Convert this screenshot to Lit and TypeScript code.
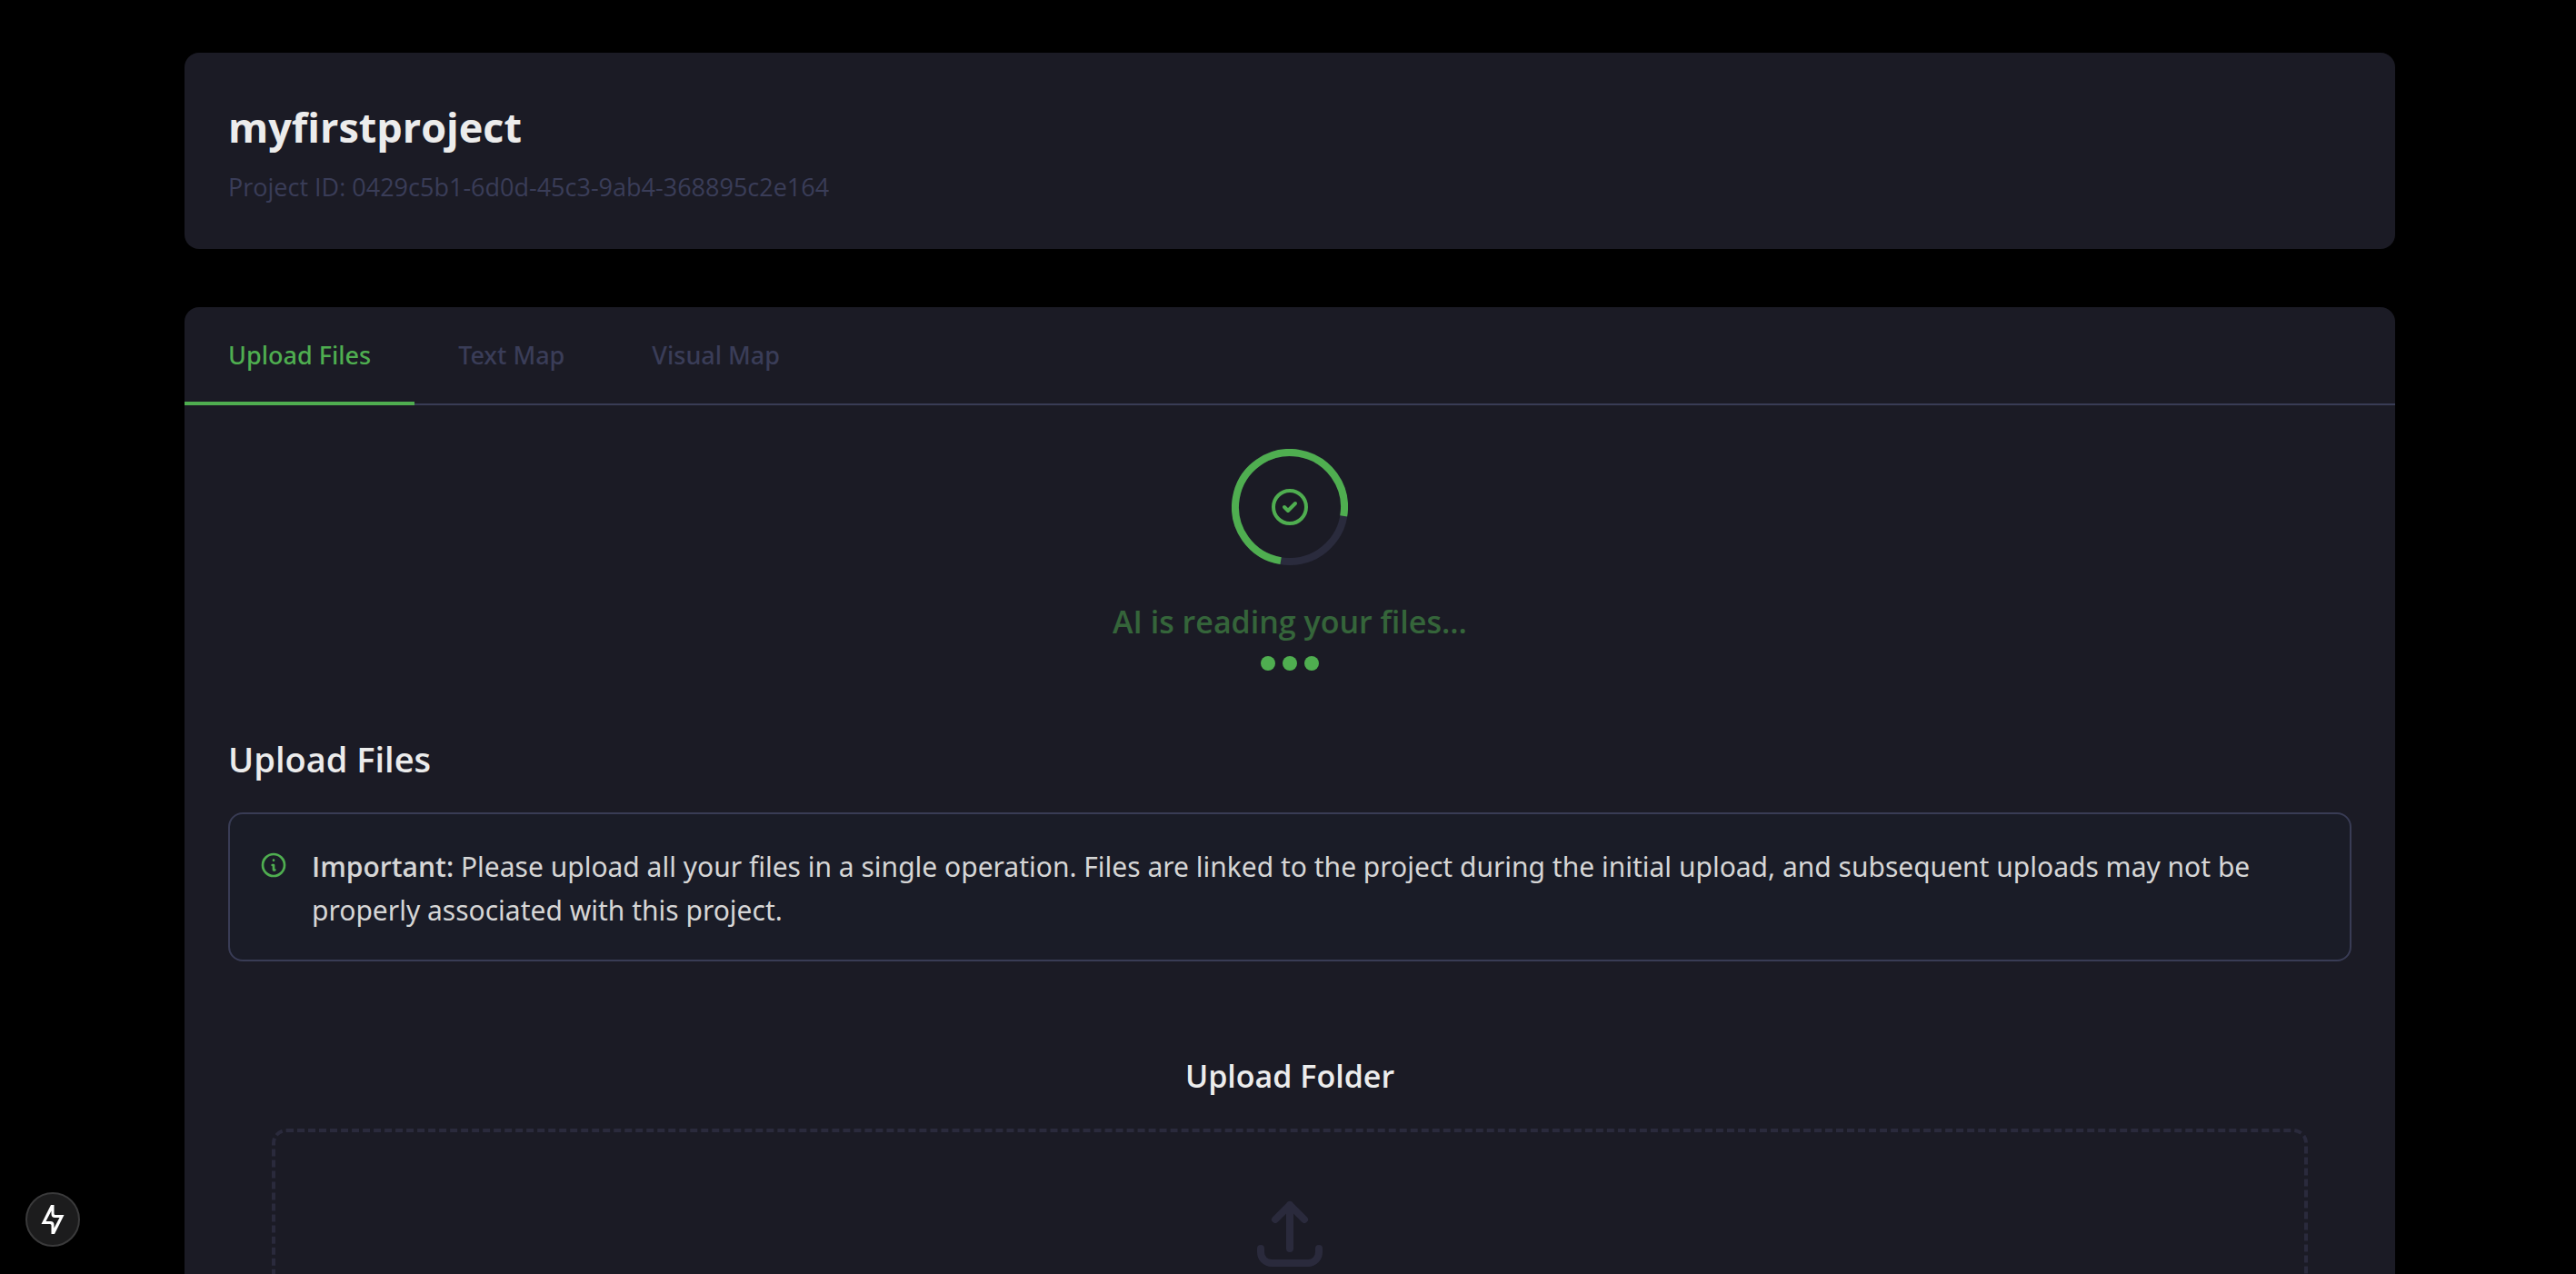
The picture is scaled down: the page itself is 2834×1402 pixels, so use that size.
import { LitElement, html, css } from 'lit';
import { customElement, state } from 'lit/decorators.js';

const TABS = ['Upload Files', 'Text Map', 'Visual Map'];

@customElement('app-root')
export class AppRoot extends LitElement {
  @state() private active = 0;

  static styles = css`
    :host {
      display: block;
      box-sizing: border-box;
      height: 100vh;
      overflow: hidden;
      padding: 58px 64px 0 68px;
      background: #000;
      color: #ececec;
      font-family: 'Open Sans', 'Noto Sans', sans-serif;
      font-size: 30px;
      line-height: 48px;
    }
    * {
      box-sizing: border-box;
    }
    h1,
    h2,
    h3,
    p {
      margin: 0;
    }
    button {
      font: inherit;
      color: inherit;
      background: none;
      border: 0;
      padding: 0;
      cursor: pointer;
    }
    svg {
      display: block;
      fill: none;
      stroke: currentColor;
      stroke-width: 2;
      stroke-linecap: round;
      stroke-linejoin: round;
    }
    .page {
      display: flex;
      flex-direction: column;
      gap: 64px;
      max-width: 2432px;
      margin: 0 auto;
    }
    .card {
      background: #1b1b25;
      border-radius: 16px;
    }
    .project {
      display: flex;
      flex-direction: column;
      gap: 12px;
      padding: 48px;
    }
    .title {
      font-size: 45px;
      line-height: 68px;
      font-weight: 700;
      font-variant-ligatures: none;
    }
    .project-id {
      font-size: 27px;
      line-height: 40px;
      color: #3a3d58;
    }
    .tabs {
      display: flex;
      height: 108px;
      border-bottom: 2px solid #393c55;
    }
    .tab {
      height: 108px;
      padding: 2px 48px 0;
      border-bottom: 4px solid transparent;
      font-family: 'Noto Sans', 'Open Sans', sans-serif;
      font-size: 27px;
      font-weight: 500;
      color: #3a3d58;
    }
    .tab.active {
      color: #4fae50;
      border-bottom-color: #4fae50;
    }
    .panel {
      padding: 48px;
    }
    .status {
      display: flex;
      flex-direction: column;
      align-items: center;
      color: #4fae50;
    }
    .spinner {
      display: grid;
      place-items: center;
      margin-bottom: 32px;
    }
    .spinner > svg {
      grid-area: 1 / 1;
    }
    .ring {
      width: 128px;
      height: 128px;
      stroke-width: 8;
      stroke-linecap: butt;
    }
    .track {
      stroke: #2a2b3d;
    }
    .check {
      width: 48px;
      height: 48px;
    }
    .status-text {
      font-size: 34px;
      font-weight: 600;
      line-height: 60px;
      opacity: 0.5;
    }
    .dots {
      display: flex;
      gap: 8px;
      margin-top: 8px;
    }
    .dot {
      width: 16px;
      height: 16px;
      border-radius: 50%;
      background: #4fae50;
    }
    .heading {
      margin-top: 64px;
      margin-bottom: 26px;
      font-size: 38px;
      font-weight: 600;
      line-height: 66px;
    }
    .notice {
      display: flex;
      gap: 26px;
      padding: 34px 32px 30px;
      border: 2px solid #393c55;
      border-radius: 16px;
      background: #1a1c27;
      color: #d6d6d6;
      font-family: 'Noto Sans', 'Open Sans', sans-serif;
    }
    .info {
      flex: none;
      width: 32px;
      height: 32px;
      margin-top: 6px;
      color: #4fae50;
    }
    strong {
      font-family: 'Open Sans', 'Noto Sans', sans-serif;
      font-weight: 600;
    }
    .folder {
      padding: 96px 48px 0;
    }
    .folder-title {
      margin-bottom: 28px;
      font-size: 34px;
      font-weight: 600;
      line-height: 60px;
      text-align: center;
    }
    .dropzone {
      display: flex;
      justify-content: center;
      width: 100%;
      padding: 64px 64px 128px;
      border: 4px dashed #2a2a3c;
      border-radius: 16px;
      color: #2a2a3c;
    }
    .upload {
      width: 96px;
      height: 96px;
    }
    .badge {
      position: fixed;
      left: 28px;
      bottom: 30px;
      display: grid;
      place-items: center;
      width: 60px;
      height: 60px;
      border: 2px solid #3a3a3b;
      border-radius: 50%;
      background: #1c1c1d;
      color: #fff;
    }
    .bolt {
      width: 32px;
      height: 32px;
      stroke: none;
      fill: currentColor;
      fill-rule: evenodd;
    }
  `;

  render() {
    return html`
      <main class="page">
        <header class="card project">
          <h1 class="title">myfirstproject</h1>
          <p class="project-id">Project ID: 0429c5b1-6d0d-45c3-9ab4-368895c2e164</p>
        </header>

        <section class="card">
          <nav class="tabs" role="tablist">
            ${TABS.map(
              (label, i) => html`<button
                class="tab ${i === this.active ? 'active' : ''}"
                role="tab"
                aria-selected=${i === this.active}
                @click=${() => (this.active = i)}
              >${label}</button>`,
            )}
          </nav>

          <div class="panel">
            <div class="status" role="status">
              <div class="spinner">
                <svg class="ring" viewBox="0 0 128 128" aria-hidden="true">
                  <circle class="track" cx="64" cy="64" r="60" />
                  <circle cx="64" cy="64" r="60" pathLength="360" stroke-dasharray="270 90" transform="rotate(99.5 64 64)" />
                </svg>
                <svg class="check" viewBox="0 0 24 24" aria-hidden="true">
                  <path d="M9 12l2 2 4-4m6 2a9 9 0 11-18 0 9 9 0 0118 0z" />
                </svg>
              </div>
              <p class="status-text">AI is reading your files...</p>
              <div class="dots">
                <span class="dot"></span>
                <span class="dot"></span>
                <span class="dot"></span>
              </div>
            </div>

            <h2 class="heading">Upload Files</h2>
            <div class="notice">
              <svg class="info" viewBox="0 0 24 24" aria-hidden="true">
                <path d="M13 16h-1v-4h-1m1-4h.01M21 12a9 9 0 11-18 0 9 9 0 0118 0z" />
              </svg>
              <p>
                <strong>Important:</strong> Please upload all your files in a single operation. Files are linked to
                the project during the initial upload, and subsequent uploads may not be properly associated with
                this project.
              </p>
            </div>

            <div class="folder">
              <h3 class="folder-title" id="folder-title">Upload Folder</h3>
              <button class="dropzone" aria-labelledby="folder-title">
                <svg class="upload" viewBox="0 0 24 24" aria-hidden="true">
                  <path d="M4 16v1a3 3 0 003 3h10a3 3 0 003-3v-1m-4-8l-4-4m0 0L8 8m4-4v12" />
                </svg>
              </button>
            </div>
          </div>
        </section>
      </main>

      <button class="badge">
        <svg class="bolt" viewBox="0 0 32 32" aria-hidden="true">
          <path d="M14 0H17.500V9.500Q17.500 11 19 11H28.500L18 32H14.500V22.500Q14.500 21 13 21H3.500ZM14.500 6.500L8.500 18H13.500Q17.500 18 17.500 22V25.500L23.500 14H18.500Q14.500 14 14.500 10Z" />
        </svg>
      </button>
    `;
  }
}
